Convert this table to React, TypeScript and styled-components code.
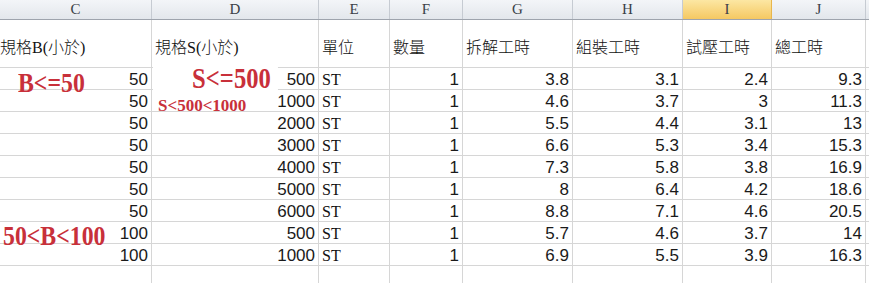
import styled, { createGlobalStyle } from 'styled-components';

export default App;

type Row = [number, number, string, number, number, number, number, number];

const columns = [
   { key: 'C', width: 152 },
   { key: 'D', width: 167 },
   { key: 'E', width: 71 },
   { key: 'F', width: 73 },
   { key: 'G', width: 110 },
   { key: 'H', width: 110 },
   { key: 'I', width: 89 },
   { key: 'J', width: 94 },
   { key: '', width: 40 },
];

const gridTemplate = columns.map((c) => `${c.width}px`).join(' ');

const titles = ['規格B(小於)', '規格S(小於)', '單位', '數量', '拆解工時', '組裝工時', '試壓工時', '總工時', ''];

const rows: Row[] = [
   [50, 500, 'ST', 1, 3.8, 3.1, 2.4, 9.3],
   [50, 1000, 'ST', 1, 4.6, 3.7, 3, 11.3],
   [50, 2000, 'ST', 1, 5.5, 4.4, 3.1, 13],
   [50, 3000, 'ST', 1, 6.6, 5.3, 3.4, 15.3],
   [50, 4000, 'ST', 1, 7.3, 5.8, 3.8, 16.9],
   [50, 5000, 'ST', 1, 8, 6.4, 4.2, 18.6],
   [50, 6000, 'ST', 1, 8.8, 7.1, 4.6, 20.5],
   [100, 500, 'ST', 1, 5.7, 4.6, 3.7, 14],
   [100, 1000, 'ST', 1, 6.9, 5.5, 3.9, 16.3],
];

function App() {
   return (
      <>
         <GlobalStyle />
         <Sheet>
            <HeaderRow>
               {columns.map((c) => (
                  <ColumnHeader key={c.key || 'k'} $selected={c.key === 'I'}>
                     {c.key}
                  </ColumnHeader>
               ))}
            </HeaderRow>

            <TitleRow>
               {titles.map((t, i) => (
                  <TitleCell key={i}>{t}</TitleCell>
               ))}
            </TitleRow>

            {rows.map((row, r) => (
               <DataRow key={r}>
                  {row.map((value, i) =>
                     typeof value === 'string' ? (
                        <TextCell key={i}>{value}</TextCell>
                     ) : (
                        <NumberCell key={i}>{value}</NumberCell>
                     ),
                  )}
                  <DataCell />
               </DataRow>
            ))}

            <DataRow>
               {columns.map((c) => (
                  <DataCell key={c.key || 'k'} />
               ))}
            </DataRow>

            <Note $left={18} $top={69} $size={28}>
               B&lt;=50
            </Note>
            <Note $left={192} $top={62} $size={29} $blank>
               S&lt;=500
            </Note>
            <Note $left={158} $top={97} $size={17} $squeeze={1}>
               S&lt;500&lt;1000
            </Note>
            <Note $left={3} $top={222} $size={28}>
               50&lt;B&lt;100
            </Note>
         </Sheet>
      </>
   );
}

const GlobalStyle = createGlobalStyle`
   html, body {
      margin: 0;
      background: #fff;
      overflow: hidden;
   }
   body {
      font-family: "Liberation Serif", "Noto Sans CJK TC", serif;
      color: #111;
   }
`;

const Sheet = styled.div`
   position: relative;
   width: 869px;
   height: 283px;
   overflow: hidden;
`;

const RowBase = styled.div`
   display: grid;
   grid-template-columns: ${gridTemplate};
`;

const HeaderRow = styled(RowBase)`
   height: 20px;
   border-bottom: 1px solid #9ea4ad;
   box-sizing: border-box;
   background: linear-gradient(#f3f5f8, #e3e7ec);
`;

const ColumnHeader = styled.div<{ $selected?: boolean }>`
   display: flex;
   align-items: center;
   justify-content: center;
   box-sizing: border-box;
   border-right: 1px solid ${(p) => (p.$selected ? '#e8b64c' : '#c6cbd2')};
   font-family: "Liberation Serif", serif;
   font-size: 15px;
   color: #3a3f47;
   background: ${(p) =>
      p.$selected ? 'linear-gradient(#fce7a3, #f5c862)' : 'transparent'};
`;

const TitleRow = styled(RowBase)`
   height: 48px;
`;

const Cell = styled.div`
   box-sizing: border-box;
   border-right: 1px solid #d6d6d6;
   border-bottom: 1px solid #d6d6d6;
   white-space: nowrap;
   overflow: hidden;
`;

const TitleCell = styled(Cell)`
   display: flex;
   align-items: center;
   padding: 5px 0 0 3px;
   font-family: "Liberation Serif", "Noto Sans CJK TC", serif;
   font-weight: 300;
   font-size: 16px;
   &:first-child {
      padding-left: 0;
   }
`;

const DataRow = styled(RowBase)`
   height: 22px;
`;

const DataCell = styled(Cell)`
   display: flex;
   align-items: flex-end;
   line-height: 18px;
   padding: 0 3px 0 3px;
`;

const NumberCell = styled(DataCell)`
   justify-content: flex-end;
   font-family: "Liberation Sans Narrow", "Liberation Sans", sans-serif;
   font-size: 17px;
   color: #1a1a1a;
`;

const TextCell = styled(DataCell)`
   font-family: "Liberation Serif", serif;
   font-size: 16px;
`;

const Note = styled.div<{
   $left: number;
   $top: number;
   $size: number;
   $squeeze?: number;
   $blank?: boolean;
}>`
   position: absolute;
   left: ${(p) => p.$left}px;
   top: ${(p) => p.$top}px;
   font-family: "Liberation Serif", serif;
   font-weight: bold;
   font-size: ${(p) => p.$size}px;
   line-height: 1;
   color: #c8303a;
   white-space: nowrap;
   transform: scaleX(${(p) => p.$squeeze ?? 0.85});
   transform-origin: left top;
   ${(p) =>
      p.$blank &&
      `
      background: #fff;
      padding: 2px 8px 8px 46px;
      margin-left: -39px;
   `}
`;
